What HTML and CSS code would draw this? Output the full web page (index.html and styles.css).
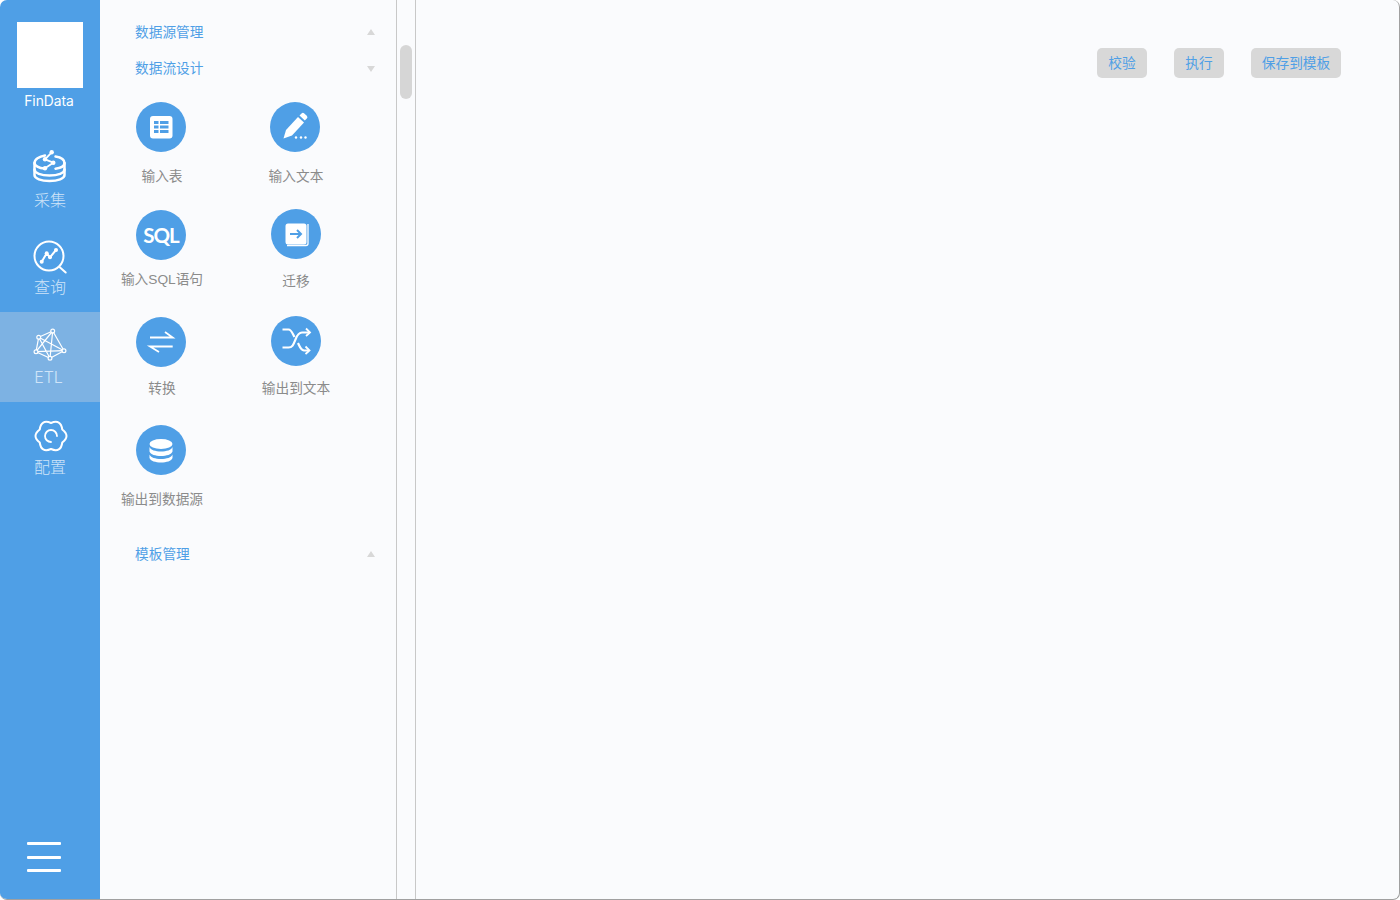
FILE: index.html
```html
<!DOCTYPE html>
<html lang="zh-CN">
<head>
<meta charset="utf-8">
<title>FinData</title>
<link rel="stylesheet" href="styles.css">
</head>
<body>
<div class="window">
  <aside class="sidebar">
    <div class="brand">
      <div class="logo"></div>
      <div class="brand-name">FinData</div>
    </div>
    <nav class="nav">
      <a class="nav-item nav-collect">
        <svg class="nav-icon" viewBox="0 0 34 34" fill="none" stroke="#fff" stroke-width="2.500" stroke-linecap="round" stroke-linejoin="round">
          <path d="M12 5.500C6 6.500 1.500 9.500 1.500 13v12c0 3.500 6.500 6 15 6s15-2.500 15-6V13c0-3-3-5.500-9-6.500"/>
          <path d="M1.500 19.500c0 3.500 6.500 6 15 6s15-2.500 15-6"/>
          <path d="M1.500 13c0 2.700 4.500 5 10 5.600M31.500 13c0 2.700-3.500 5-9 5.700"/>
          <path d="M12 18.300l8.300-5.600-8.300-3.400 6.700-7" stroke-width="1.800"/>
          <circle cx="12" cy="18.300" r="2.200" fill="#fff" stroke="none"/><circle cx="20.300" cy="12.700" r="2.200" fill="#fff" stroke="none"/><circle cx="12" cy="9.300" r="2.200" fill="#fff" stroke="none"/><circle cx="18.700" cy="2.300" r="2.200" fill="#fff" stroke="none"/>
        </svg>
        <span class="nav-label">采集</span>
      </a>
      <a class="nav-item nav-query">
        <svg class="nav-icon" viewBox="0 0 34 34" fill="none" stroke="#fff" stroke-linecap="round" stroke-linejoin="round">
          <circle cx="16" cy="16" r="14.500" stroke-width="2"/>
          <path d="M26.500 27l6.200 5.500" stroke-width="2"/>
          <path d="M8.700 21.700l5-8.400 3.300 4 6-7.300" stroke-width="2"/>
          <circle cx="8.700" cy="21.700" r="2" fill="#fff" stroke="none"/><circle cx="13.700" cy="13.300" r="2" fill="#fff" stroke="none"/><circle cx="17" cy="17.300" r="2" fill="#fff" stroke="none"/><circle cx="23" cy="10" r="2" fill="#fff" stroke="none"/>
        </svg>
        <span class="nav-label">查询</span>
      </a>
      <a class="nav-item nav-etl is-active">
        <svg class="nav-icon" viewBox="0 0 34 34" fill="none" stroke="#fff" stroke-width="1.200" stroke-linejoin="round">
          <path d="M5.700 8.300L19.700 2 31 21.700 17 29.300 3 22.700z"/>
          <path d="M5.700 8.300L17 29.300M19.700 2L3 22.700M19.700 2L17 29.300M5.700 8.300L31 21.700M3 22.700L31 21.700"/>
          <circle cx="5.700" cy="8.300" r="1.900" fill="#7db2e3"/><circle cx="19.700" cy="2" r="1.900" fill="#7db2e3"/><circle cx="31" cy="21.700" r="1.900" fill="#7db2e3"/><circle cx="17" cy="29.300" r="1.900" fill="#7db2e3"/><circle cx="3" cy="22.700" r="1.900" fill="#7db2e3"/>
        </svg>
        <span class="nav-label nav-label-latin">ETL</span>
      </a>
      <a class="nav-item nav-config">
        <svg class="nav-icon nav-icon-gear" viewBox="0 0 34 34" fill="none" stroke="#fff" stroke-width="2" stroke-linecap="round" stroke-linejoin="round">
          <path d="M17 4Q26.870-.1 28.260 10.500Q36.740 17 28.260 23.500Q26.870 34.100 17 30Q7.130 34.100 5.740 23.500Q-2.740 17 5.740 10.500Q7.130-.1 17 4Z"/>
          <path d="M17 23a6 6 0 1 1 6-6" stroke-width="1.800"/>
        </svg>
        <span class="nav-label">配置</span>
      </a>
    </nav>
    <button class="menu-btn" aria-label="菜单"><span></span><span></span><span></span></button>
  </aside>

  <section class="panel">
    <div class="section-head"><span>数据源管理</span><i class="tri tri-up"></i></div>
    <div class="section-head"><span>数据流设计</span><i class="tri tri-down"></i></div>
    <div class="tools">
      <div class="tool">
        <div class="tool-icon">
          <svg viewBox="0 0 50 50"><rect x="14" y="14" width="22.500" height="22.500" rx="3" fill="#fff"/><path d="M18 19h4.500v3H18zM24 19h8.500v3H24zM18 23.500h4.500v3H18zM24 23.500h8.500v3H24zM18 28h4.500v3H18zM24 28h8.500v3H24z" fill="#4f9fe6"/></svg>
        </div>
        <div class="tool-label">输入表</div>
      </div>
      <div class="tool">
        <div class="tool-icon tool-icon-left">
          <svg viewBox="0 0 50 50"><path d="M13.500 36.500l2.500-8.500 12-13 6 5.500-12 13z" fill="#fff"/><path d="M29.500 13.500l2-2a2 2 0 0 1 2.800 0l2.500 2.300a2 2 0 0 1 0 2.800l-2 2z" fill="#fff"/><circle cx="26" cy="35.500" r="1.200" fill="#fff"/><circle cx="31" cy="35.500" r="1.200" fill="#fff"/><circle cx="35.500" cy="35.500" r="1.200" fill="#fff"/></svg>
        </div>
        <div class="tool-label">输入文本</div>
      </div>
      <div class="tool">
        <div class="tool-icon tool-icon-sql">SQL</div>
        <div class="tool-label tool-label-tight">输入SQL语句</div>
      </div>
      <div class="tool tool-raise">
        <div class="tool-icon">
          <svg viewBox="0 0 50 50"><path d="M16 36.500h19a2 2 0 0 0 2-2V15" fill="none" stroke="#fff" stroke-width="1.300"/><rect x="14.500" y="14.500" width="21" height="21" rx="2.500" fill="#fff"/><path d="M19 25h11M26 21l4 4-4 4" fill="none" stroke="#4f9fe6" stroke-width="2"/></svg>
        </div>
        <div class="tool-label tool-label-low">迁移</div>
      </div>
      <div class="tool">
        <div class="tool-icon">
          <svg viewBox="0 0 50 50" fill="none" stroke="#fff" stroke-width="1.800"><path d="M14 20.500h22.700L29 15"/><path d="M36.700 29.500H14L23 35"/></svg>
        </div>
        <div class="tool-label tool-label-mid">转换</div>
      </div>
      <div class="tool tool-raise">
        <div class="tool-icon">
          <svg viewBox="0 0 50 50" fill="none" stroke="#fff" stroke-width="2.200"><path d="M11.500 13.500h6c3 0 4 4 6 7.500"/><path d="M11.500 31.500h6c4 0 5-3 7-8 1.500-4 3-7 6.500-7h7"/><path d="M27 27c1.500 3 2.500 7 6 7.500h5"/><path d="M35 12.500l4 4-4 3.500M34.500 30.500l4 4-4 3.500" stroke-width="1.800"/></svg>
        </div>
        <div class="tool-label tool-label-low">输出到文本</div>
      </div>
      <div class="tool">
        <div class="tool-icon">
          <svg viewBox="0 0 50 50" fill="#fff"><ellipse cx="25" cy="19" rx="11.500" ry="5"/><path d="M13.500 22c1 3 6 4.500 11.500 4.500S35.500 25 36.500 22v4.500c-1 3-6 4.500-11.500 4.500s-10.500-1.500-11.500-4.500z"/><path d="M13.500 29.500c1 3 6 4.500 11.500 4.500s10.500-1.500 11.500-4.500v3.500c-1 3-6 4.500-11.500 4.500S14.500 36 13.500 33z"/></svg>
        </div>
        <div class="tool-label">输出到数据源</div>
      </div>
    </div>
    <div class="section-head section-head-last"><span>模板管理</span><i class="tri tri-up"></i></div>
  </section>

  <div class="scroll-strip"><div class="scroll-thumb"></div></div>

  <main class="canvas">
    <div class="actions">
      <button class="action">校验</button>
      <button class="action">执行</button>
      <button class="action action-wide">保存到模板</button>
    </div>
  </main>
</div>
</body>
</html>
```
FILE: styles.css
```css
* { box-sizing: border-box; }
html, body { height: 100%; }
body {
  margin: 0;
  background: #fff;
  font-family: "Liberation Sans", "Noto Sans CJK SC", sans-serif;
}
.window {
  display: flex;
  height: 900px;
  overflow: hidden;
  background: #fafbfd;
  border: 1px solid #a0a0a0;
  border-width: 0 1px 1px 0;
  border-radius: 7px;
}
.sidebar {
  flex: none;
  width: 100px;
  display: flex;
  flex-direction: column;
  background: #4f9fe6;
  color: #fff;
}
.brand {
  height: 132px;
  padding-top: 22px;
  display: flex;
  flex-direction: column;
  align-items: center;
}
.logo { width: 66px; height: 66px; background: #fff; }
.brand-name {
  margin-top: 4px;
  margin-right: 2px;
  font-family: Inter, "Noto Sans", sans-serif;
  font-size: 13.800px;
  line-height: 18px;
  color: #fff;
}
.nav { flex: 1; }
.nav-item {
  height: 90px;
  display: flex;
  flex-direction: column;
  align-items: center;
  color: #cfe4f8;
}
.nav-icon { width: 34px; height: 34px; display: block; overflow: visible; }
.nav-icon-gear { margin-left: 2px; }
.nav-label {
  font-size: 16px;
  font-weight: 300;
  line-height: 20px;
}
.nav-collect { padding-top: 18px; }
.nav-collect .nav-label { margin-top: 7px; }
.nav-query { padding-top: 18px; }
.nav-query .nav-label { margin-top: 4px; }
.nav-etl { padding-top: 17px; }
.nav-etl .nav-label { margin-top: 4px; margin-right: 3px; }
.nav-config { padding-top: 17px; }
.nav-config .nav-label { margin-top: 5px; }
.nav-label-latin {
  font-family: Inter, "Noto Sans", sans-serif;
  color: #cfe4f8;
}
.is-active { background: #7db2e3; }
.menu-btn {
  margin: 0 0 27px 27px;
  padding: 0;
  width: 34px;
  height: 30px;
  border: 0;
  background: none;
  display: flex;
  flex-direction: column;
  justify-content: space-between;
}
.menu-btn span { display: block; height: 3px; background: #fff; border-radius: 1px; }

.panel {
  flex: none;
  width: 297px;
  padding-top: 13px;
  border-right: 1px solid #c8c8c8;
}
.section-head {
  height: 36px;
  padding: 0 21px 0 35px;
  display: flex;
  align-items: center;
  justify-content: space-between;
  font-size: 13.700px;
  color: #4f9fe6;
}
.tri { width: 0; height: 0; border: 4px solid transparent; }
.tri-up { margin-top: 2px; border-top: 0; border-bottom: 6px solid #d8d8d8; }
.tri-down { margin-top: 4px; border-bottom: 0; border-top: 6px solid #d8d8d8; }
.tools {
  margin-top: 17px;
  display: grid;
  grid-template-columns: 122px 148px;
  grid-template-rows: 108px 107px 108px 83px;
}
.tool {
  display: flex;
  flex-direction: column;
  align-items: center;
}
.tool:nth-child(odd) .tool-label { margin-left: 2px; }
.tool-icon {
  width: 50px;
  height: 50px;
  border-radius: 50%;
  background: #4f9fe6;
  flex: none;
}
.tool-icon-left { margin-right: 2px; }
.tool-icon svg { display: block; width: 50px; height: 50px; }
.tool-icon-sql {
  display: flex;
  align-items: center;
  justify-content: center;
  font-family: Lato, "Open Sans", sans-serif;
  font-weight: 700;
  font-size: 20.500px;
  color: #fff;
  letter-spacing: -1px;
}
.tool-label {
  margin-top: 15px;
  font-size: 13.700px;
  line-height: 20px;
  color: #8b8b8b;
  white-space: nowrap;
}
.tool-label.tool-label-tight { margin-top: 10px; }
.tool-label.tool-label-low { margin-top: 13px; }
.tool-label.tool-label-mid { margin-top: 12px; }
.tool-raise { margin-top: -1px; }
.section-head-last { margin-top: 27px; }

.scroll-strip {
  flex: none;
  width: 19px;
  padding: 45px 3px 0;
  border-right: 1px solid #c8c8c8;
}
.scroll-thumb { width: 12px; height: 54px; border-radius: 6px; background: #d6d6d6; }

.canvas { flex: 1; min-width: 0; }
.actions {
  display: flex;
  justify-content: flex-end;
  gap: 27px;
  padding: 48px 58px 0 0;
}
.action {
  width: 50px;
  height: 30px;
  padding: 0 0 2px;
  border: 0;
  border-radius: 5px;
  background: #d8d8d8;
  color: #4f9fe6;
  font-family: inherit;
  font-size: 13.700px;
}
.action-wide { width: 90px; }
```
